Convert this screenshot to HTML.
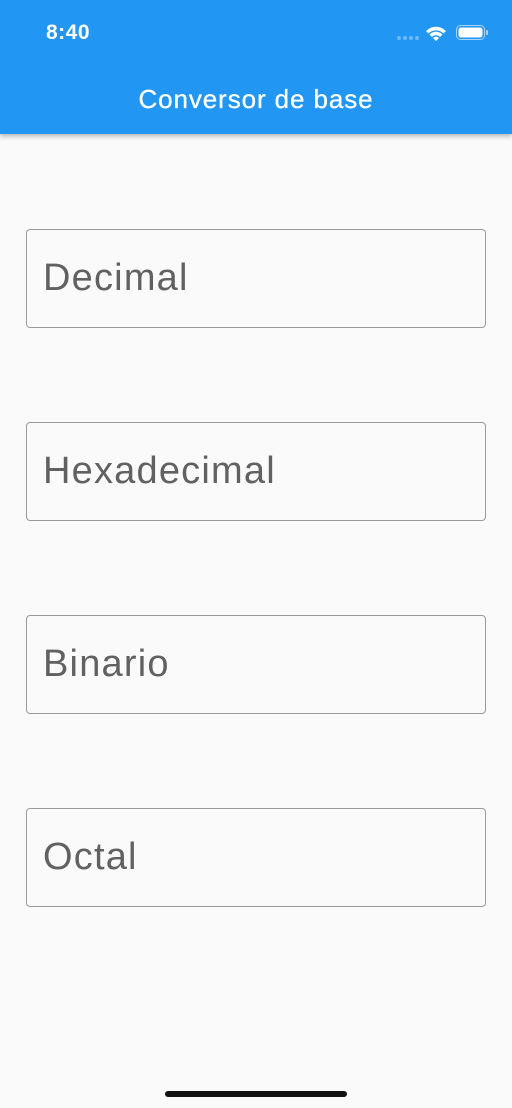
<!DOCTYPE html>
<html><head><meta charset="utf-8"><style>
body{margin:0;width:512px;height:1108px;background:#fafafa;font-family:"Liberation Sans",sans-serif;position:relative;overflow:hidden}
.bar{position:absolute;left:0;top:0;width:512px;height:134px;background:#2196f3;box-shadow:0 2px 5px rgba(0,0,0,.3)}
.time{position:absolute;left:46px;top:21px;color:#fff;font-weight:bold;font-size:21px;letter-spacing:0.5px}
.title{position:absolute;left:0;width:512px;top:84px;text-align:center;color:#fff;font-size:26px;letter-spacing:0.9px;-webkit-text-stroke:0.3px #fff}
.f{position:absolute;left:26px;width:458px;height:97px;border:1px solid #9a9a9a;border-radius:4px}
.f span{position:absolute;left:16px;top:27px;font-size:38px;color:#616161;letter-spacing:1.2px}
.home{position:absolute;left:165px;top:1091px;width:182px;height:6px;border-radius:3px;background:#111}
</style></head><body>
<div class="bar">
<div class="time">8:40</div>
<svg style="position:absolute;left:396px;top:22px" width="96" height="22">
<g fill="rgba(255,255,255,.35)"><circle cx="3" cy="16" r="2"/><circle cx="9" cy="16" r="2"/><circle cx="15" cy="16" r="2"/><circle cx="21" cy="16" r="2"/></g>
<path d="M30 9 a14 14 0 0 1 20 0 l-2.5 2.5 a10.5 10.5 0 0 0 -15 0z M33.5 12.5 a9 9 0 0 1 13 0 l-2.5 2.5 a5.5 5.5 0 0 0 -8 0z M37 16 a4 4 0 0 1 6 0 l-3 3z" fill="#fff"/>
<rect x="60.5" y="3.5" width="28" height="14" rx="4" fill="none" stroke="rgba(255,255,255,.6)"/>
<rect x="62.5" y="5.5" width="24" height="10" rx="2.5" fill="#fff"/>
<rect x="90" y="8" width="2" height="5" rx="1" fill="rgba(255,255,255,.6)"/>
</svg>
<div class="title">Conversor de base</div>
</div>
<div class="f" style="top:229px"><span>Decimal</span></div>
<div class="f" style="top:422px"><span>Hexadecimal</span></div>
<div class="f" style="top:615px"><span>Binario</span></div>
<div class="f" style="top:808px"><span>Octal</span></div>
<div class="home"></div>
</body></html>
